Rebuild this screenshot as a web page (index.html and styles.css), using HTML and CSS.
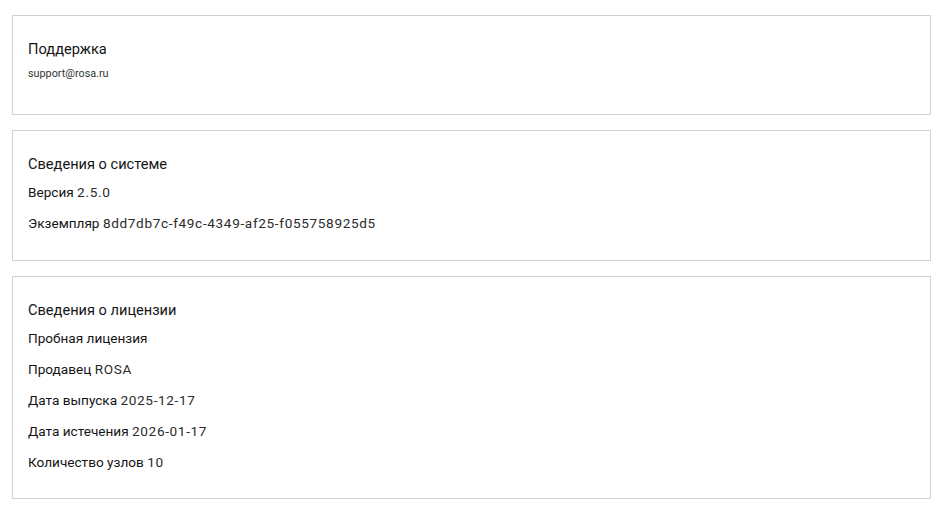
FILE: index.html
```html
<!DOCTYPE html>
<html lang="ru">
<head>
<meta charset="utf-8">
<title>О системе</title>
<link rel="stylesheet" href="styles.css">
</head>
<body>
<div class="page">
  <section class="card card-support">
    <h2 class="card-title">Поддержка</h2>
    <div class="support-email">support@rosa.ru</div>
  </section>
  <section class="card card-system">
    <h2 class="card-title">Сведения о системе</h2>
    <div class="rows">
      <div class="row">Версия <span class="val">2.5.0</span></div>
      <div class="row">Экземпляр <span class="val">8dd7db7c-f49c-4349-af25-f055758925d5</span></div>
    </div>
  </section>
  <section class="card">
    <h2 class="card-title">Сведения о лицензии</h2>
    <div class="rows">
      <div class="row">Пробная лицензия</div>
      <div class="row">Продавец <span class="val">ROSA</span></div>
      <div class="row">Дата выпуска <span class="val">2025-12-17</span></div>
      <div class="row">Дата истечения <span class="val">2026-01-17</span></div>
      <div class="row">Количество узлов <span class="val">10</span></div>
    </div>
  </section>
</div>
</body>
</html>
```
FILE: styles.css
```css
html, body {
  margin: 0;
  padding: 0;
  background: #ffffff;
}
body {
  font-family: Roboto, "Noto Sans", sans-serif;
  color: #151515;
}
.page {
  display: flex;
  flex-direction: column;
  gap: 15px;
  padding: 15px 13px 0 12px;
}
.card {
  border: 1px solid #d2d2d2;
  padding: 22px 15px 25px 15px;
}
.card-support {
  padding-bottom: 31px;
}
.card-system {
  padding-bottom: 26px;
}
.card-title {
  margin: 0 0 7px 0;
  font-size: 14.6px;
  font-weight: 400;
  line-height: 22px;
  color: #151515;
}
.support-email {
  margin-top: -2px;
  font-size: 10.8px;
  line-height: 18px;
  color: #333333;
}
.rows {
  display: flex;
  flex-direction: column;
  gap: 10px;
}
.row {
  font-size: 13.6px;
  line-height: 21px;
  color: #151515;
}
.val {
  color: #2b2b2b;
  letter-spacing: 0.65px;
}
```
